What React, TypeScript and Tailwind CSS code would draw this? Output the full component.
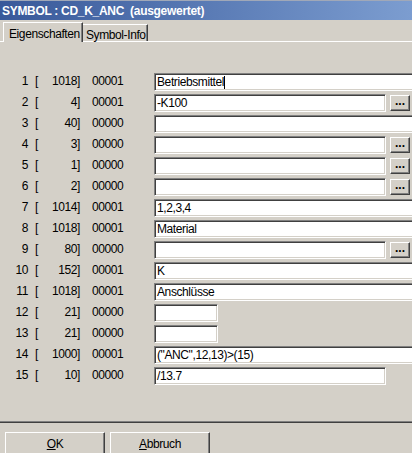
import React from "react";

type Kind = "full" | "btn" | "short" | "mid";

const rows: { n: number; len: number; flag: string; value: string; kind: Kind }[] = [
  { n: 1, len: 1018, flag: "00001", value: "Betriebsmittel", kind: "full" },
  { n: 2, len: 4, flag: "00001", value: "-K100", kind: "btn" },
  { n: 3, len: 40, flag: "00000", value: "", kind: "full" },
  { n: 4, len: 3, flag: "00000", value: "", kind: "btn" },
  { n: 5, len: 1, flag: "00000", value: "", kind: "btn" },
  { n: 6, len: 2, flag: "00000", value: "", kind: "btn" },
  { n: 7, len: 1014, flag: "00001", value: "1,2,3,4", kind: "full" },
  { n: 8, len: 1018, flag: "00001", value: "Material", kind: "full" },
  { n: 9, len: 80, flag: "00000", value: "", kind: "btn" },
  { n: 10, len: 152, flag: "00001", value: "K", kind: "full" },
  { n: 11, len: 1018, flag: "00001", value: "Anschlüsse", kind: "full" },
  { n: 12, len: 21, flag: "00000", value: "", kind: "short" },
  { n: 13, len: 21, flag: "00000", value: "", kind: "short" },
  { n: 14, len: 1000, flag: "00001", value: '("ANC",12,13)>(15)', kind: "full" },
  { n: 15, len: 10, flag: "00000", value: "/13.7", kind: "mid" },
];

const sunken =
  "border border-t-[#808080] border-l-[#808080] border-b-white border-r-white shadow-[inset_1px_1px_0_#404040,inset_-1px_-1px_0_#d4d0c8] bg-white";
const raised =
  "border border-t-white border-l-white border-b-[#404040] border-r-[#404040] shadow-[inset_-1px_-1px_0_#808080] bg-[#d4d0c8]";

function Field({ value, kind, cursor }: { value: string; kind: Kind; cursor?: boolean }) {
  const width =
    kind === "full" ? "w-[262px]" : kind === "short" ? "w-[64px]" : "w-[232px]";
  return (
    <div className="flex items-start gap-[4px] shrink-0">
      <div className={`${sunken} ${width} shrink-0 h-[18px] pl-[2px] flex items-center text-[12px] leading-none whitespace-nowrap overflow-hidden`}>
        <span>{value}</span>
        {cursor && <span className="w-[1px] h-[13px] bg-black" />}
      </div>
      {kind === "btn" && (
        <div className={`${raised} shrink-0 mt-[1px] w-[20px] h-[16px] flex items-end justify-center text-[12px] font-bold leading-none pb-[3px] tracking-[0px]`}>
          ...
        </div>
      )}
    </div>
  );
}

export default function App() {
  return (
    <div className="w-[412px] h-[453px] overflow-hidden bg-[#d4d0c8] text-black font-['Liberation_Sans',Arial,sans-serif] tracking-[-0.4px]">
      {/* title bar */}
      <div className="h-[20px] border-t border-t-[#a0a8b8] bg-linear-to-r from-[#39599a] to-[#7c9dd0] flex items-center pl-[2px]">
        <span className="text-white font-bold text-[12px] tracking-[-0.3px] whitespace-pre">
          SYMBOL : CD_K_ANC  (ausgewertet)
        </span>
      </div>

      {/* tabs */}
      <div className="h-[21px] flex items-end pl-[3px] relative z-10">
        <div className="h-[20px] w-[80px] border-t border-l border-t-white border-l-white border-r border-r-[#404040] shadow-[inset_-1px_0_0_#808080] bg-[#d4d0c8] -mb-[1px] flex items-start pt-[2px] pl-[5px] text-[12px]">
          Eigenschaften
        </div>
        <div className="h-[17px] w-[65px] border-t border-t-white border-r border-r-[#404040] shadow-[inset_-1px_0_0_#808080] flex items-start pt-[1px] pl-[3px] text-[12px]">
          Symbol-Info
        </div>
      </div>

      {/* panel */}
      <div className="h-[382px] border-t border-t-white border-b border-b-[#404040] shadow-[inset_0_-1px_0_#808080] pt-[31px] flex flex-col">
        {rows.map((r) => (
          <div key={r.n} className="h-[21px] flex items-start">
            <div className="w-[154px] shrink-0 h-[18px] flex items-center text-[12px] leading-none -mt-[1px]">
              <span className="w-[28px] text-right">{r.n}</span>
              <span className="ml-[7px]">[</span>
              <span className="w-[42px] text-right">{r.len}]</span>
              <span className="ml-[12px]">{r.flag}</span>
            </div>
            <Field value={r.value} kind={r.kind} cursor={r.n === 1} />
          </div>
        ))}
      </div>

      {/* buttons */}
      <div className="flex gap-[5px] pl-[5px] pt-[9px]">
        <div className={`${raised} w-[100px] h-[23px] flex items-center justify-center text-[12px]`}>
          <span>
            <span className="underline">O</span>K
          </span>
        </div>
        <div className={`${raised} w-[100px] h-[23px] flex items-center justify-center text-[12px]`}>
          <span>
            <span className="underline">A</span>bbruch
          </span>
        </div>
      </div>
    </div>
  );
}
